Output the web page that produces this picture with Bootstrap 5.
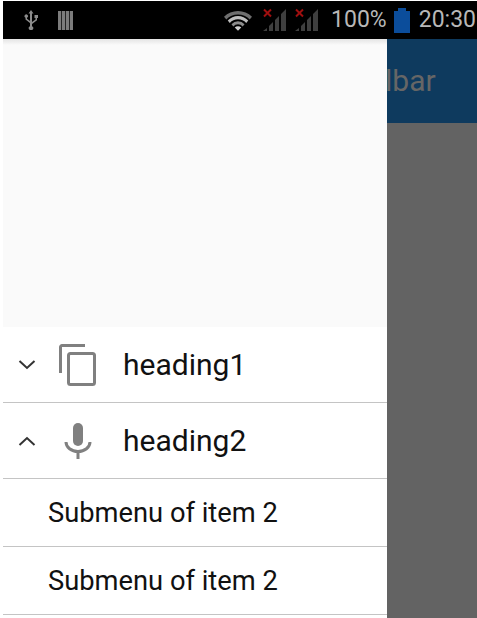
<!DOCTYPE html>
<html lang="en">
<head>
    <meta charset="utf-8">
    <meta name="viewport" content="width=device-width, initial-scale=1.0">
    <title>Drawer menu</title>
    <link rel="stylesheet" href="https://cdn.jsdelivr.net/npm/bootstrap@5.3.0/dist/css/bootstrap.min.css">
    <style>
        html, body { height: 618px; overflow: hidden; }
        body { background: #fff; font-family: Roboto, sans-serif; }
        .phone { width: 474px; height: 617px; margin: 1px 0 0 3px; background: #636363; }
        .status-bar { height: 38px; background: #000; color: #b8b8b8; font-size: 23px; }
        .ic-usb { margin-left: 21px; }
        .ic-barcode { margin-left: 20px; }
        .ic-sig1 { margin-left: 11px; }
        .ic-sig2 { margin-left: 8px; }
        .status-pct { margin-left: 12px; }
        .ic-batt { margin-left: 7px; }
        .status-time { margin-left: 9px; margin-right: 1px; }
        .app-row { height: 579px; }
        .drawer { width: 384px; background: #fff; position: relative; z-index: 1; }
        .drawer-top { height: 288px; background: #fafafa; background-image: linear-gradient(#e4e4e4, #fafafa 6px); }
        .side-area { min-width: 0; }
        .app-toolbar { height: 84px; background: #0e3a5e; color: #666; font-size: 30px; line-height: 84px; }
        .toolbar-title { margin-left: -2px; white-space: nowrap; }
        .menu-row { border-bottom: 1px solid #c4c4c4; color: #111; }
        .menu-head { height: 76px; font-size: 30px; }
        .menu-sub { height: 68px; font-size: 27.3px; padding-left: 45px; padding-top: 2px; }
        .chevron { width: 56px; }
        .head-icon { width: 64px; }
    </style>
</head>
<body>
<div class="phone">
    <div class="status-bar d-flex align-items-center">
        <svg class="ic-usb" width="14" height="20" viewBox="0 0 14 20" fill="#8c8c8c">
            <path d="M7 0l2.500 3.500H8V12l3.500-2.500V8H10.500V5H14v3h-1v2.300L8 14v2.200a2.200 2.200 0 1 1-2 0V13L1.500 9.500V7.700a1.700 1.700 0 1 1 1.500 0v1.100L6 11V3.500H4.500z"/>
        </svg>
        <svg class="ic-barcode" width="15" height="19" viewBox="0 0 15 19" fill="#7c7c7c">
            <path d="M0 0h3.300v19H0zM4 0h3.300v19H4zM8 0h3.300v19H8zM12 0h3v19h-3z"/>
        </svg>
        <svg class="ms-auto" width="28" height="21" viewBox="0 0 30 22">
            <path d="M0 7a21 21 0 0 1 30 0l-2.500 3a17 17 0 0 0-25 0z" fill="#6e6e6e"/>
            <path d="M4 11a15 15 0 0 1 22 0l-2.200 2.600a12 12 0 0 0-17.600 0z" fill="#bdbdbd"/>
            <path d="M8 15a9.500 9.500 0 0 1 14 0l-2 2.300a6.500 6.500 0 0 0-10 0z" fill="#8c8c8c"/>
            <path d="M11.500 18.500a5 5 0 0 1 7 0L15 22z" fill="#d0d0d0"/>
        </svg>
        <svg class="ic-sig1" width="24" height="24" viewBox="0 0 24 24">
            <path d="M0 23l4-3v3zM6 23v-5l4-4v9zM12 23V12l4-4v15zM18 23V6l5-5v22z" fill="#3f3f3f"/>
            <path d="M1 1.500l7 7M8 1.500l-7 7" stroke="#a00f0f" stroke-width="2" fill="none"/>
        </svg>
        <svg class="ic-sig2" width="24" height="24" viewBox="0 0 24 24">
            <path d="M0 23l4-3v3zM6 23v-5l4-4v9zM12 23V12l4-4v15zM18 23V6l5-5v22z" fill="#3f3f3f"/>
            <path d="M1 1.500l7 7M8 1.500l-7 7" stroke="#a00f0f" stroke-width="2" fill="none"/>
        </svg>
        <span class="status-pct">100%</span>
        <svg class="ic-batt" width="16" height="25" viewBox="0 0 16 25">
            <path d="M0 3h4V0h8v3h4v22H0z" fill="#0b4d9b"/>
        </svg>
        <span class="status-time">20:30</span>
    </div>
    <div class="app-row d-flex">
        <div class="drawer d-flex flex-column flex-shrink-0">
            <div class="drawer-top"></div>
            <div class="menu-row menu-head d-flex align-items-center">
                <svg class="chevron flex-shrink-0" height="10" viewBox="0 0 56 10" fill="none" stroke="#333" stroke-width="2"><path d="M16.500 1l7.500 7 7.500-7"/></svg>
                <span class="head-icon flex-shrink-0 d-flex">
                    <svg width="37" height="42" viewBox="0 0 37 42" fill="none" stroke="#808080" stroke-width="3">
                        <path d="M1.500 29V3a1.500 1.500 0 0 1 1.500-1.500h23"/>
                        <rect x="9.500" y="9.500" width="26" height="31" rx="2"/>
                    </svg>
                </span>
                <span>heading1</span>
            </div>
            <div class="menu-row menu-head d-flex align-items-center">
                <svg class="chevron flex-shrink-0" height="10" viewBox="0 0 56 10" fill="none" stroke="#333" stroke-width="2"><path d="M16.500 9l7.500-7 7.500 7"/></svg>
                <span class="head-icon flex-shrink-0 d-flex">
                    <svg width="37" height="38" viewBox="0 0 37 38" fill="#808080">
                        <path d="M14 6a5 5 0 0 1 10 0v13a5 5 0 0 1-10 0z"/>
                        <path d="M7 20a12 9.500 0 0 0 24 0M19 29v8" fill="none" stroke="#808080" stroke-width="3"/>
                    </svg>
                </span>
                <span>heading2</span>
            </div>
            <div class="menu-row menu-sub d-flex align-items-center">Submenu of item 2</div>
            <div class="menu-row menu-sub d-flex align-items-center">Submenu of item 2</div>
        </div>
        <div class="side-area flex-grow-1">
            <div class="app-toolbar"><div class="toolbar-title">lbar</div></div>
        </div>
    </div>
</div>
<script src="https://cdn.jsdelivr.net/npm/bootstrap@5.3.0/dist/js/bootstrap.bundle.min.js"></script>
</body>
</html>
